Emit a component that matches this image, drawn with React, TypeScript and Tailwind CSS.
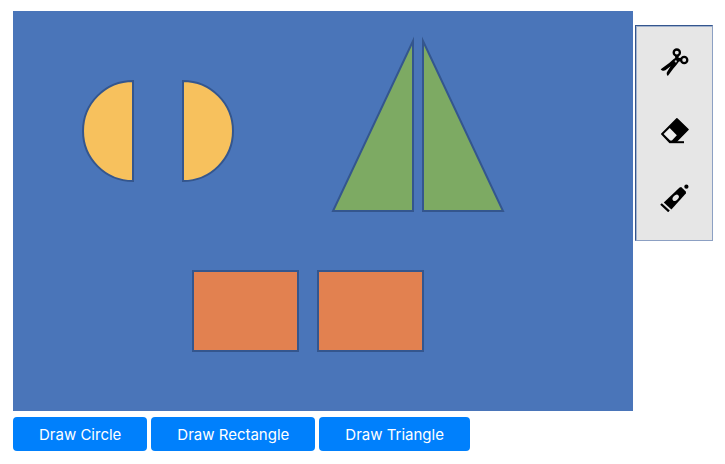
import type { ReactNode } from "react";

function ToolButton({ label, children }: { label: string; children: ReactNode }) {
  return (
    <button type="button" aria-label={label} className="flex h-[68px] w-full items-center justify-center">
      <svg viewBox="5 6 29 28" className="h-7 w-[29px]" aria-hidden="true">
        {children}
      </svg>
    </button>
  );
}

function DrawButton({ children }: { children: ReactNode }) {
  return (
    <button
      type="button"
      className="rounded bg-[#0080fc] px-[26px] pt-1.5 pb-1 text-[15px] leading-6 text-white"
    >
      {children}
    </button>
  );
}

function Scissors() {
  return (
    <>
      <g fill="none" stroke="#000" strokeWidth="2.3">
        <circle cx="21.8" cy="10.6" r="3.1" />
        <circle cx="29.2" cy="18" r="3.1" />
      </g>
      <path
        d="M20 13.2L23.8 13.6L23.6 15.9L26.6 15.8L27 18.6L23.8 19.8L21.6 22.7L18 27L12.8 34C11.5 32.8 11.4 31.3 12.2 29.8L15.6 24.2L10.4 28.3C9 29.1 7 29 5.7 27.2L14.2 21L18.4 17.2L20.2 16Z"
        fill="#000"
      />
      <circle cx="20.8" cy="19.4" r="1.1" fill="#c8c8c8" />
    </>
  );
}

function Eraser() {
  return (
    <>
      <path d="M6.8 24L21.9 8.8L33 19.5L20.5 32.2L14.6 32.2Z" fill="#000" stroke="#000" strokeWidth="1.6" strokeLinejoin="round" />
      <path d="M8.6 24L14.7 17.9L21.8 25.2L16.9 30.6L15.2 30.6Z" fill="#eee" />
      <path d="M14.4 32.2H29" stroke="#000" strokeWidth="2" />
    </>
  );
}

function GlueTube() {
  return (
    <>
      <path d="M6 26L14 33.4" stroke="#000" strokeWidth="2.3" fill="none" />
      <path d="M8.8 24.4L24.6 9.4L26.2 9L31 13.8L30.8 15.6L16.4 31.6Z" fill="#000" />
      <circle cx="31.4" cy="8.7" r="2.1" fill="#000" />
      <ellipse cx="20.7" cy="19.8" rx="3.7" ry="2.4" transform="rotate(-45 20.7 19.8)" fill="#e6e6e6" />
    </>
  );
}

export default function App() {
  return (
    <main className="min-h-screen bg-white pt-[11px] pr-3 pl-[13px] font-['Inter','Liberation_Sans',sans-serif]">
      <div className="flex items-start gap-0.5">
        <div className="min-w-0 flex-1 bg-[#4a75b9]">
          <svg
            viewBox="0 0 620 400"
            role="img"
            aria-label="Drawing board"
            className="block w-full"
            stroke="#34568e"
            strokeWidth="2"
            strokeMiterlimit="10"
          >
            <g fill="#f7c15d">
              <path d="M120 70A50 50 0 0 0 120 170Z" />
              <path d="M170 70A50 50 0 0 1 170 170Z" />
            </g>
            <g fill="#7daa63">
              <path d="M400 30V200H320Z" />
              <path d="M410 30V200H490Z" />
            </g>
            <g fill="#e28150">
              <rect x="180" y="260" width="105" height="80" />
              <rect x="305" y="260" width="105" height="80" />
            </g>
          </svg>
        </div>
        <div
          role="toolbar"
          aria-label="Shape tools"
          className="mt-3.5 w-[78px] border border-t-[#34568e] border-r-[#8ca0c3] border-b-[#8ca0c3] border-l-[#34568e] bg-[#e6e6e6] pt-0.5 pb-2 pl-px shadow-[inset_1px_1px_0_#a3b3cd]"
        >
          <ToolButton label="Cut">
            <Scissors />
          </ToolButton>
          <ToolButton label="Erase">
            <Eraser />
          </ToolButton>
          <ToolButton label="Glue">
            <GlueTube />
          </ToolButton>
        </div>
      </div>
      <div className="mt-1.5 flex flex-wrap gap-1">
        <DrawButton>Draw Circle</DrawButton>
        <DrawButton>Draw Rectangle</DrawButton>
        <DrawButton>Draw Triangle</DrawButton>
      </div>
    </main>
  );
}
